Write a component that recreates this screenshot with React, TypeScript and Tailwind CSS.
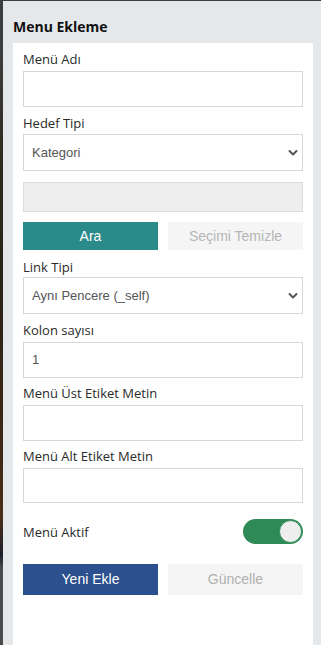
import React from 'react';

const labelCls =
  "block text-[13px] leading-[18px] text-[#2a2a2a] font-['Open_Sans',sans-serif]";
const inputCls =
  "block w-full border border-[#d5d8db] bg-white px-2 text-[13px] text-[#555] font-['Liberation_Sans',Arial,sans-serif]";

function Chevron() {
  return (
    <svg width="10" height="7" viewBox="0 0 10 7" className="absolute right-[4px] top-1/2 -translate-y-1/2">
      <path d="M1.5 1.5l3.5 3.5 3.5-3.5" fill="none" stroke="#555" strokeWidth="2" strokeLinecap="round" strokeLinejoin="round" />
    </svg>
  );
}

function SelectBox({ value }: { value: string }) {
  return (
    <div className={`${inputCls} relative flex h-[37px] items-center`}>
      <span>{value}</span>
      <Chevron />
    </div>
  );
}

export default function App() {
  return (
    <div className="flex h-[645px] w-[321px] overflow-hidden">
      {/* background peeking through on the left */}
      <div className="w-[3px] bg-[linear-gradient(to_bottom,#3d3d3d_0%,#3d3d3d_8%,#2f2a1e_25%,#2b2418_45%,#3a2516_65%,#4a2e16_80%,#1e1e2c_86%,#4a4a4a_88%,#4a4a4a_100%)]" />
      <div className="flex flex-1 flex-col border-t border-[#3d3d3d] bg-[#e5e8eb]">
        <h2 className="pl-[10px] pt-[16px] text-[14px] font-bold leading-[20px] text-[#111] font-['Open_Sans',sans-serif]">
          Menu Ekleme
        </h2>
        <div className="ml-[10px] mr-[8px] mt-[6px] flex-1 bg-white px-[10px] pt-[7px]">
          <label className={labelCls}>Menü Adı</label>
          <div className={`${inputCls} mt-[3px] h-[36px]`} />

          <label className={`${labelCls} mt-[7px]`}>Hedef Tipi</label>
          <div className="mt-[2px]">
            <SelectBox value="Kategori" />
          </div>
          <div className="mt-[11px] h-[30px] border border-[#dcdcdc] bg-[#eeeeee]" />

          <div className="mt-[10px] grid grid-cols-2 gap-[10px]">
            <button className="h-[28px] bg-[#2b8a8a] text-[14px] text-white font-['Liberation_Sans',Arial,sans-serif]">
              Ara
            </button>
            <button className="h-[28px] bg-[#f5f5f5] text-[14px] text-[#b5b5b5] font-['Liberation_Sans',Arial,sans-serif]">
              Seçimi Temizle
            </button>
          </div>

          <label className={`${labelCls} mt-[8px]`}>Link Tipi</label>
          <div className="mt-[1px]">
            <SelectBox value="Aynı Pencere (_self)" />
          </div>

          <label className={`${labelCls} mt-[7px]`}>Kolon sayısı</label>
          <div className={`${inputCls} mt-[3px] flex h-[36px] items-center`}>1</div>

          <label className={`${labelCls} mt-[6px]`}>Menü Üst Etiket Metin</label>
          <div className={`${inputCls} mt-[3px] h-[36px]`} />

          <label className={`${labelCls} mt-[6px]`}>Menü Alt Etiket Metin</label>
          <div className={`${inputCls} mt-[3px] h-[35px]`} />

          <div className="mt-[16px] flex items-center justify-between">
            <span className={labelCls}>Menü Aktif</span>
            <div className="flex h-[25px] w-[60px] items-center justify-end rounded-full bg-[#2e8b57] pr-[1px]">
              <div className="h-[23px] w-[23px] rounded-full border border-[#2e8b57] bg-[#eeeeee]" />
            </div>
          </div>

          <div className="mt-[20px] grid grid-cols-2 gap-[10px]">
            <button className="h-[31px] bg-[#2c4f8e] text-[14px] text-white font-['Liberation_Sans',Arial,sans-serif]">
              Yeni Ekle
            </button>
            <button className="h-[31px] bg-[#f5f5f5] text-[14px] text-[#b0b0b0] font-['Liberation_Sans',Arial,sans-serif]">
              Güncelle
            </button>
          </div>
        </div>
      </div>
    </div>
  );
}
